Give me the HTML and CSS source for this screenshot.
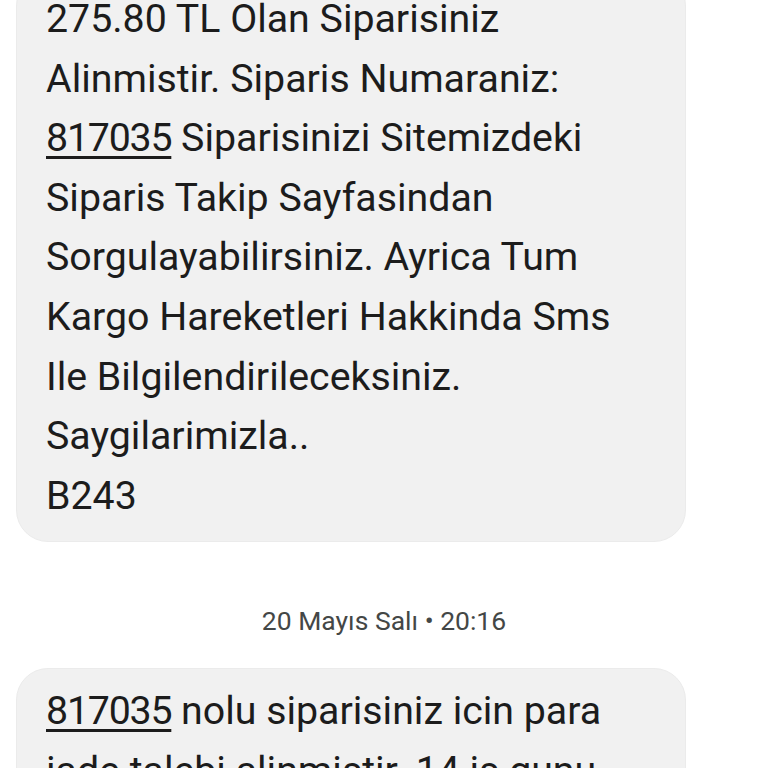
FILE: index.html
```html
<!DOCTYPE html>
<html lang="tr">
<head>
<meta charset="utf-8">
<link rel="stylesheet" href="styles.css">
</head>
<body>
<main class="thread">
  <div class="bubble bubble-first">
    <p class="msg">275.80 TL Olan Siparisiniz<br>Alinmistir. Siparis Numaraniz:<br><span class="link">817035</span> Siparisinizi Sitemizdeki<br>Siparis Takip Sayfasindan<br>Sorgulayabilirsiniz. Ayrica Tum<br>Kargo Hareketleri Hakkinda Sms<br>Ile Bilgilendirileceksiniz.<br>Saygilarimizla..<br>B243</p>
  </div>
  <div class="stamp">20 Mayıs Salı • 20:16</div>
  <div class="bubble bubble-second">
    <p class="msg"><span class="link">817035</span> nolu siparisiniz icin para<br>iade talebi alinmistir. 14 is gunu</p>
  </div>
</main>
</body>
</html>
```
FILE: styles.css
```css
html, body {
  margin: 0;
  padding: 0;
  background: #ffffff;
  overflow: hidden;
}
.thread {
  display: flex;
  flex-direction: column;
  align-items: flex-start;
  padding: 0 16px;
}
.bubble {
  box-sizing: border-box;
  width: 670px;
  background: #f1f1f1;
  border: 1px solid #ebebeb;
  border-radius: 32px;
  padding: 15px 29px 15px 29px;
}
.bubble-first {
  margin-top: -26px;
}
.bubble-second {
  padding-top: 13px;
}
.msg {
  margin: 0;
  font-family: Roboto, "Noto Sans", sans-serif;
  font-size: 39.3px;
  line-height: 59.6px;
  color: #1c1c1c;
  white-space: nowrap;
}
.link {
  letter-spacing: -1.2px;
  text-decoration: underline;
  text-decoration-thickness: 2.5px;
  text-underline-offset: 5px;
}
.stamp {
  align-self: center;
  margin: 62px 0 30px 0;
  font-family: Roboto, "Noto Sans", sans-serif;
  font-size: 26.5px;
  line-height: 34px;
  color: #444746;
}
```
